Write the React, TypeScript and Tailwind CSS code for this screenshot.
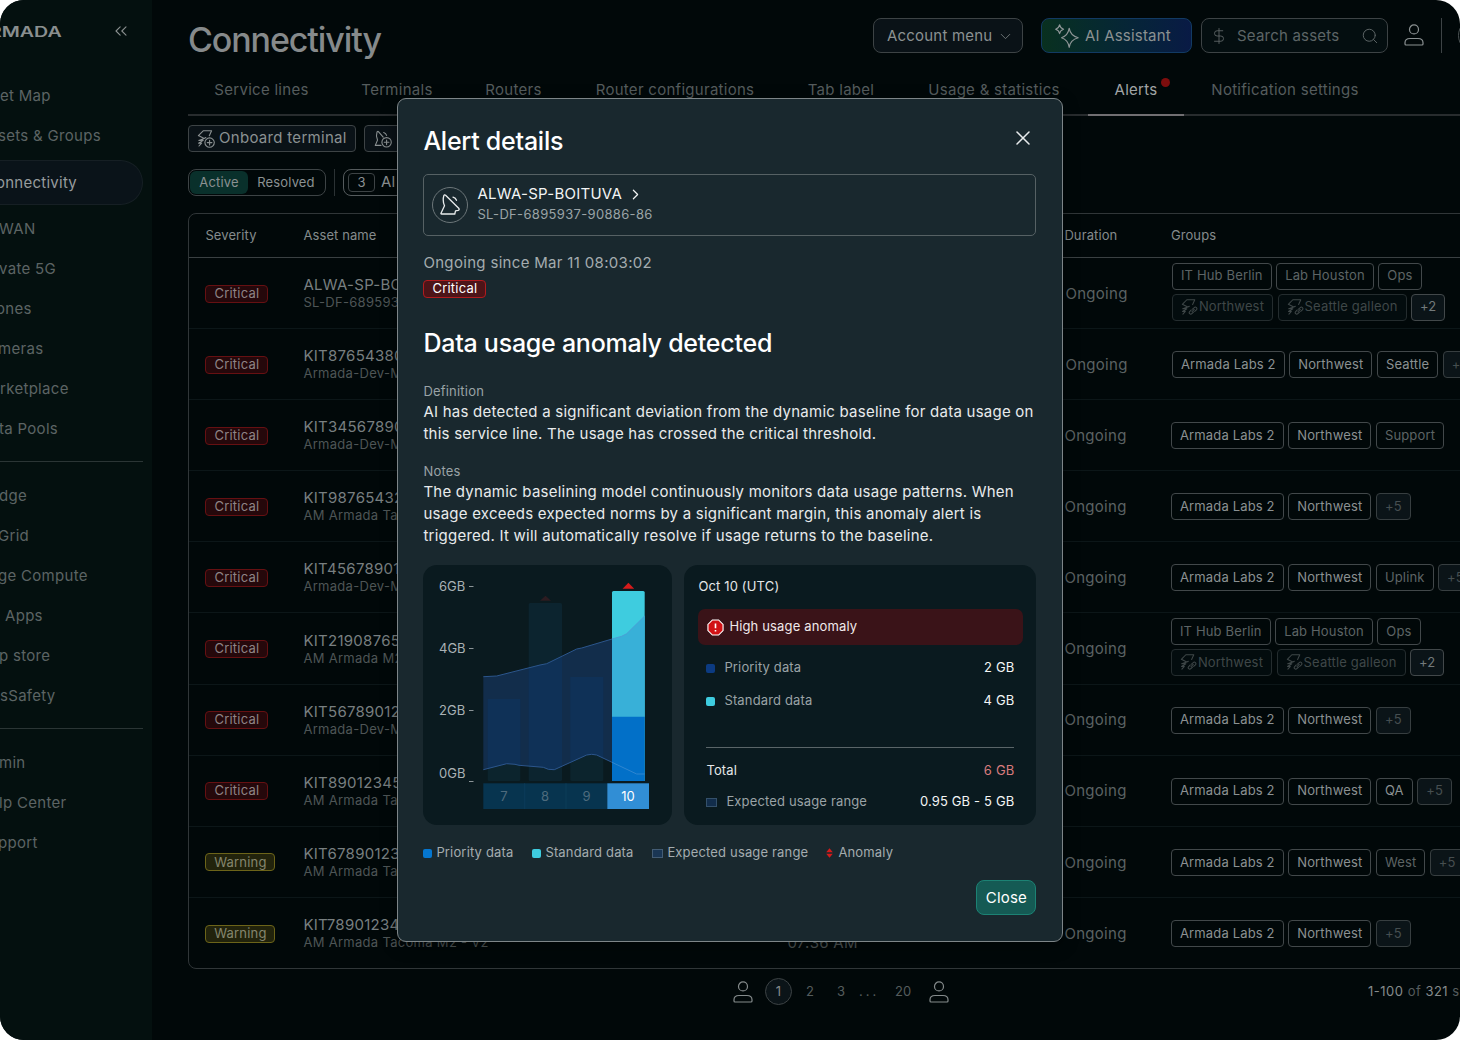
import React from 'react';
import { ChevronDown, ChevronRight, ChevronsLeft, DollarSign, Search, X } from 'lucide-react';

type Chip = { label: string; kind?: 'dim' | 'more' | 'moreDim' | 'linked' };

type Row = {
  severity: 'Critical' | 'Warning';
  name: string;
  sub: string;
  time?: string;
  shift?: boolean;
  chips: Chip[][];
};

const labs: Chip[] = [{ label: 'Armada Labs 2' }, { label: 'Northwest' }];
const plus5: Chip = { label: '+5', kind: 'moreDim' };
const hub: Chip[][] = [
  [
    { label: 'IT Hub Berlin', kind: 'dim' },
    { label: 'Lab Houston', kind: 'dim' },
    { label: 'Ops', kind: 'dim' },
  ],
  [
    { label: 'Northwest', kind: 'linked' },
    { label: 'Seattle galleon', kind: 'linked' },
    { label: '+2', kind: 'more' },
  ],
];

const rows: Row[] = [
  { severity: 'Critical', name: 'ALWA-SP-BO', sub: 'SL-DF-6895937', shift: true, chips: hub },
  { severity: 'Critical', name: 'KIT87654380', sub: 'Armada-Dev-M', shift: true, chips: [[...labs, { label: 'Seattle' }, plus5]] },
  { severity: 'Critical', name: 'KIT34567890', sub: 'Armada-Dev-M', chips: [[...labs, { label: 'Support', kind: 'dim' }]] },
  { severity: 'Critical', name: 'KIT98765432', sub: 'AM Armada Tac', chips: [[...labs, plus5]] },
  { severity: 'Critical', name: 'KIT45678901', sub: 'Armada-Dev-M', chips: [[...labs, { label: 'Uplink', kind: 'dim' }, plus5]] },
  { severity: 'Critical', name: 'KIT21908765', sub: 'AM Armada M2', chips: hub },
  { severity: 'Critical', name: 'KIT56789012', sub: 'Armada-Dev-M', chips: [[...labs, plus5]] },
  { severity: 'Critical', name: 'KIT89012345', sub: 'AM Armada Tac', chips: [[...labs, { label: 'QA' }, plus5]] },
  { severity: 'Warning', name: 'KIT67890123', sub: 'AM Armada Tac', chips: [[...labs, { label: 'West', kind: 'dim' }, plus5]] },
  { severity: 'Warning', name: 'KIT78901234', sub: 'AM Armada Tacoma M2 - V2', time: '07:36 AM', chips: [[...labs, plus5]] },
];

const tabs = [
  { label: 'Service lines', width: 'w-[147px]' },
  { label: 'Terminals', width: 'w-[124px]' },
  { label: 'Routers', width: 'w-[109px]' },
  { label: 'Router configurations', width: 'w-[214px]' },
  { label: 'Tab label', width: 'w-[118px]' },
  { label: 'Usage & statistics', width: 'w-[188px]' },
  { label: 'Alerts', width: 'w-[96px]', active: true },
  { label: 'Notification settings', width: 'w-[202px]' },
];

function TerminalIcon({ badge, className }: { badge: 'plus' | 'link'; className?: string }) {
  return (
    <svg viewBox="0 0 18 18" className={className} fill="none" stroke="currentColor" strokeWidth="1.1" strokeLinecap="round" strokeLinejoin="round">
      <path d="M1.4 5.6 6.2.8h8.400l-2.300 5M1.400 5.600l5.800 2.800-5.400 2h4.400l-4.600 2.900 3-.2-2.600 2.900M7.200 8.400l1.600-.8" />
      {badge === 'plus' ? (
        <>
          <circle cx="12.600" cy="12.600" r="4.700" />
          <path d="M12.600 10.300v4.600M10.300 12.600h4.600" />
        </>
      ) : (
        <path d="m12.200 10.800 1.800-1.700a1.600 1.600 0 0 1 2.300 2.300l-1.800 1.700M13.200 13.900l-1.700 1.700a1.600 1.600 0 0 1-2.300-2.300l1.700-1.700M11.600 13.500l2.400-2.400" />
      )}
    </svg>
  );
}

function DishIcon({ className }: { className?: string }) {
  return (
    <svg viewBox="0 0 20 21" className={className} fill="none" stroke="currentColor" strokeWidth="1.300" strokeLinecap="round" strokeLinejoin="round">
      <path d="M5.600 1.200C4.800.5 4.100.8 3.800 1.800 2.900 5 3.100 8.600 4.500 11.800L1 19.200q-.3.8.6.800h13.200l.7-3.200 2.700-.5c1-.3 1.300-1.100.5-2Z" />
      <path d="M13 3.200q2.700.7 3.500 3.100" />
    </svg>
  );
}

function DishPlusIcon({ className }: { className?: string }) {
  return (
    <svg viewBox="0 0 18 18" className={className} fill="none" stroke="currentColor" strokeWidth="1.100" strokeLinecap="round" strokeLinejoin="round">
      <path d="M7 15.400H1.300l2.200-5.300C2.300 7.600 2.200 4.600 3 2.200c.3-.9 1-1 1.600-.4l4.600 5.400M9.700 2.500q2.200.6 2.900 2.900" />
      <circle cx="12.600" cy="12.300" r="4.700" />
      <path d="M12.600 10v4.600M10.300 12.300h4.600" />
    </svg>
  );
}

function PersonIcon({ className }: { className?: string }) {
  return (
    <svg viewBox="0 0 20 22" className={className} fill="none" stroke="currentColor" strokeWidth="1.200">
      <circle cx="10" cy="5.400" r="4.500" />
      <path d="M1 20v-1.200C1 16.200 3.200 14.500 6 14.500h8c2.800 0 5 1.700 5 4.300V20c0 .7-.4 1-1 1H2c-.6 0-1-.3-1-1Z" />
    </svg>
  );
}

function SparklesIcon({ className }: { className?: string }) {
  return (
    <svg viewBox="0 0 24 24" className={className} fill="none" stroke="currentColor" strokeWidth="1.100" strokeLinejoin="round">
      <path d="M14.200 4.200c.8 5.200 3.100 8.100 9 9.600-5.900 1.500-8.200 4.200-9 9.600-.8-5.400-3.100-8.100-7.700-9.600 4.600-1.500 6.900-4.400 7.700-9.600Z" />
      <path d="M4.600.7c.4 2.500 1.600 3.800 4 4.500-2.400.7-3.600 2-4 4.500C4.200 7.200 3 5.900.6 5.200 3 4.500 4.200 3.200 4.600.7Z" />
    </svg>
  );
}

function NavItem({ label, nudge = '' }: { label: string; nudge?: string }) {
  return (
    <div className="h-10 pt-px flex items-center whitespace-nowrap text-[15px] tracking-[0.3px] text-[#5c6464]">
      <span className={nudge}>{label}</span>
    </div>
  );
}

function Sidebar() {
  return (
    <aside className="w-[152px] shrink-0 h-full bg-[#04100f] overflow-hidden">
      <div className="h-[76px] flex justify-between pr-[21px] pt-[21px]">
        <div className="h-5 -ml-[11px] flex items-center origin-left scale-x-[1.4] text-[14px] font-semibold text-[#8a8f8f]">RMADA</div>
        <ChevronsLeft size={20} strokeWidth={1.300} className="text-[#8a8f8f]" />
      </div>
      <NavItem label="et Map" />
      <NavItem label="sets & Groups" nudge="-ml-[2px]" />
      <div className="mt-1 mb-1 mr-[9px] h-[45px] pt-px flex items-center rounded-r-full border border-l-0 border-[#161f24] bg-[#0a1319] text-[15px] tracking-[0.250px] text-[#969b9d]">
        <span className="-ml-[4px]">onnectivity</span>
      </div>
      <NavItem label="WAN" nudge="-ml-px" />
      <NavItem label="vate 5G" nudge="-ml-px" />
      <NavItem label="ones" nudge="-ml-[4px]" />
      <NavItem label="meras" nudge="-ml-[2px]" />
      <NavItem label="rketplace" />
      <NavItem label="ta Pools" nudge="-ml-px" />
      <div className="mt-3 mb-[14px] mr-[9px] h-px bg-[#2b3535]" />
      <NavItem label="dge" nudge="-ml-px" />
      <NavItem label="Grid" nudge="-ml-[2px]" />
      <NavItem label="ge Compute" nudge="-ml-[2px]" />
      <NavItem label="Apps" nudge="ml-[5px]" />
      <NavItem label="p store" nudge="-ml-px" />
      <NavItem label="sSafety" />
      <div className="mt-3 mb-[14px] mr-[9px] h-px bg-[#2b3535]" />
      <NavItem label="min" nudge="-ml-[1px]" />
      <NavItem label="lp Center" nudge="-ml-px" />
      <NavItem label="pport" nudge="-ml-[2px]" />
    </aside>
  );
}

function Header() {
  return (
    <header className="h-[65px] flex shrink-0">
      <h1 className="w-[685px] shrink-0 pt-[18px] leading-[44px] text-[34px] font-medium tracking-[-1.100px] text-[#868a8b]">Connectivity</h1>
      <div className="flex pt-[18px] h-[53px] text-[15px] tracking-[0.2px] text-[#8b9192] whitespace-nowrap">
        <div className="w-[150px] shrink-0 pt-px flex items-center justify-between pl-[13px] pr-2 rounded-lg border border-[#3d4345] bg-[#0a1217]">
          Account menu
          <ChevronDown size={17} strokeWidth={1.200} className="text-[#7b8182]" />
        </div>
        <div className="ml-[18px] w-[151px] shrink-0 pt-px flex items-center pl-[13px] rounded-lg border border-[#123a63] bg-linear-to-r from-[#09301f] to-[#091a45]">
          <SparklesIcon className="size-6 shrink-0 text-[#8f9697]" />
          <span className="ml-[6px]">AI Assistant</span>
        </div>
        <div className="ml-[9px] w-[187px] shrink-0 pt-px flex items-center pl-2 rounded-lg border border-[#3d4345] bg-[#040e10] text-[#5d6566]">
          <DollarSign size={18} strokeWidth={1.200} />
          <span className="ml-[9px]">Search assets</span>
          <Search size={18} strokeWidth={1.300} className="ml-[22px]" />
        </div>
        <PersonIcon className="ml-[16px] mt-[6px] w-5 h-[22px] shrink-0 text-[#8b9192]" />
        <div className="ml-[17px] w-px shrink-0 bg-[#3d4345]" />
        <div className="ml-[16px] w-9 shrink-0 rounded-full border border-[#4c5354]" />
      </div>
    </header>
  );
}

function Tabs() {
  return (
    <nav className="h-[51px] shrink-0 flex w-[1310px] border-b-2 border-[#282c2e] text-[15px] tracking-[0.280px] text-[#555c5d]">
      {tabs.map((tab) => (
        <div key={tab.label} className={`relative h-[51px] shrink-0 flex items-center justify-center whitespace-nowrap ${tab.width} ${tab.active ? 'border-b-2 border-[#716f72] text-[#a1a5a6] pt-px' : 'pb-px'}`}>
          {tab.label}
          {tab.active && <span className="absolute left-[73px] top-[13px] size-[9px] rounded-full bg-[#7d0d0d]" />}
        </div>
      ))}
    </nav>
  );
}

function Toolbar() {
  return (
    <>
      <div className="mt-[9px] h-[27px] flex shrink-0">
        <div className="w-[168px] flex items-center pl-[8px] rounded-[4px] border border-[#3d4345] bg-[#0a1217] text-[15px] tracking-[0.3px] text-[#8b9192] whitespace-nowrap">
          <TerminalIcon badge="plus" className="size-[18px] mr-[4px]" />
          Onboard terminal
        </div>
        <div className="ml-[8px] w-[168px] flex items-center pl-[9px] rounded-[4px] border border-[#3d4345] bg-[#0a1217] text-[#8b9192]">
          <DishPlusIcon className="size-[18px]" />
        </div>
      </div>
      <div className="mt-[17px] h-[27px] flex shrink-0 text-[13px] tracking-[0.150px] text-[#8b9192]">
        <div className="w-[138px] flex rounded-[8px] border border-[#3d4345] p-px">
          <div className="w-[58px] flex items-center justify-center rounded-[6px] bg-[#09302b]">Active</div>
          <div className="flex-1 flex items-center justify-center">Resolved</div>
        </div>
        <div className="ml-[8px] w-px bg-[#2b3234]" />
        <div className="ml-[8px] w-[150px] flex items-center gap-[6px] pl-[4px] rounded-[8px] border border-[#555b5d]">
          <span className="w-[27px] h-[19px] flex items-center justify-center rounded-[4px] border border-[#3d4345]">3</span>
          <span className="text-[15px]">Al</span>
        </div>
      </div>
    </>
  );
}

function GroupChip({ chip }: { chip: Chip }) {
  let tone = 'border-[#42484a] text-[#8b9192]';
  if (chip.kind === 'dim') tone = 'border-[#42484a] text-[#5d6465]';
  if (chip.kind === 'linked') tone = 'border-[#242c2e] text-[#3f4748] bg-[#030c0e]';
  if (chip.kind === 'more') tone = 'border-[#42484a] text-[#737a7b] bg-[#0b1418]';
  if (chip.kind === 'moreDim') tone = 'border-[#373e40] text-[#464e50] bg-[#0b1418]';
  return (
    <span className={`h-[27px] shrink-0 flex items-center px-[8px] rounded-[4px] border text-[13px] tracking-[0.160px] whitespace-nowrap ${tone}`}>
      {chip.kind === 'linked' && <TerminalIcon badge="link" className="size-[17px] mr-px" />}
      {chip.label}
    </span>
  );
}

function AlertsTable() {
  return (
    <section className="mt-[17px] h-[756px] w-[1400px] shrink-0 flex flex-col rounded-[8px] border border-[#303638]">
      <div className="h-[44px] shrink-0 flex items-center border-b border-[#3a4042] pl-[16.400px] text-[13px] tracking-[0.1px] text-[#858b8c]">
        <span className="w-[98px]">Severity</span>
        <span className="w-[761px]">Asset name</span>
        <span className="w-[106.500px]">Duration</span>
        <span>Groups</span>
      </div>
      {rows.map((row, i) => (
        <div key={row.name} className={`h-[71.100px] shrink-0 pt-px flex items-center pl-[16.400px] ${i < rows.length - 1 ? 'border-b border-[#0c1618]' : ''}`}>
          <div className="w-[98px]">
            <SeverityBadge severity={row.severity} />
          </div>
          <div className="w-[484px]">
            <div className="leading-[18px] text-[15px] tracking-[0.270px] text-[#787f80]">{row.name}</div>
            <div className="leading-[17px] text-[13px] tracking-[0.3px] text-[#4e5556]">{row.sub}</div>
          </div>
          <div className="w-[277px] pt-[18px] leading-[18px] text-[15px] tracking-[0.270px] text-[#4e5556]">{row.time}</div>
          <div className={`flex items-center ${row.shift ? 'pl-px' : ''}`}>
            <div className="w-[106.500px] pt-px text-[15px] tracking-[0.3px] text-[#5b6263]">Ongoing</div>
            <div className={`flex flex-col gap-[4px] ${row.chips.length > 1 ? '-mt-[4px]' : ''}`}>
              {row.chips.map((line, j) => (
                <div key={j} className="flex gap-[4.500px]">
                  {line.map((chip) => (
                    <GroupChip key={chip.label} chip={chip} />
                  ))}
                </div>
              ))}
            </div>
          </div>
        </div>
      ))}
    </section>
  );
}

function SeverityBadge({ severity }: { severity: 'Critical' | 'Warning' }) {
  const tone = severity === 'Critical' ? 'w-[63px] border-[#661012] bg-[#25080b] text-[#8f8486]' : 'w-[70px] border-[#6c6419] bg-[#22230c] text-[#85866f]';
  return <div className={`h-[18px] flex items-center justify-center rounded-[4px] border text-[13px] tracking-[0.2px] ${tone}`}>{severity}</div>;
}

function Pagination() {
  return (
    <div className="mt-[9px] h-[27px] w-[1400px] pl-[545px] flex shrink-0 items-center text-[13px] text-[#555c5d] whitespace-nowrap">
      <PersonIcon className="w-5 h-[22px] shrink-0 text-[#858b8c]" />
      <span className="ml-[12px] size-[27px] shrink-0 flex items-center justify-center rounded-full border border-[#3d4345] bg-[#0b1418] text-[#858b8c]">1</span>
      <span className="ml-[14px] w-[31px] shrink-0">2</span>
      <span className="w-[22px] shrink-0">3</span>
      <span className="w-[36px] shrink-0 tracking-[3px]">...</span>
      <span className="w-[34px] shrink-0">20</span>
      <PersonIcon className="w-5 h-[22px] shrink-0 text-[#858b8c]" />
      <span className="ml-[419px] tracking-[0.500px]">
        <span className="text-[#858b8c]">1-100</span> of <span className="text-[#858b8c]">321</span> s
      </span>
    </div>
  );
}

function UsageChart() {
  return (
    <svg viewBox="0 0 249 260" className="w-[249px] h-[260px] rounded-[14px] bg-[#0a1a1f]">
      <g fontSize="13" fill="#a9b1b4">
        <text x="16" y="26">6GB</text>
        <text x="16" y="88">4GB</text>
        <text x="16" y="150.400">2GB</text>
        <text x="16" y="212.700">0GB</text>
      </g>
      <path d="M46 21.500h4.500M46 83.500h4.500M46 145.500h4.500M46 216.500h4.500" stroke="#8b9497" />

      <rect x="64.700" y="134" width="32.600" height="82" rx="1.500" fill="#0c242d" />
      <rect x="105.700" y="38" width="33.300" height="178" rx="1.500" fill="#0c242f" />
      <rect x="147.300" y="112" width="33" height="104" rx="1.500" fill="#0c242d" />
      <path d="M60.300 111.700 73.700 111 117 100l6.700-1.300 30-14.700 5-1 30.300-9v123.300L173.700 190l-5-.7-5 .7-32.400 14.700-6-.4-5-2L96 200.300l-4-1-8.300-.6-23.400 6Z" fill="#122d4b" />
      <path d="M64.700 134h32.600v66.500l-5.300-1.200-8.300-.6-19 4.900ZM105.700 102.900 117 100l6.700-1.300L139 91.200v110l-7.700 3.500-6-.4-5-2-14.600-1.200ZM147.300 112h33v81.200l-6.600-3.200-5-.7-5 .7-16.400 7.400Z" fill="#0f3157" />

      <path d="M189 216V27.500q0-1.500 1.500-1.500h29.700q1.500 0 1.500 1.500V216Z" fill="#3eccdf" />
      <path d="M189 74l9.700-2.700 5-2.600 18-17.700v101H189Z" fill="#38b0d8" />
      <path d="M189 151.700h32.700V216H189Z" fill="#0270c8" />

      <path d="M60.300 111.700 73.700 111 117 100l6.700-1.300 30-14.700 5-1 30.300-9" fill="none" stroke="#2c568c" />
      <path d="M189 74l9.700-2.700 5-2.600 18-17.700" fill="none" stroke="#4a9fd6" />
      <path d="m60.300 204.700 23.400-6 8.300.6 4 1 24.300 2 5 2 6 .4 32.400-14.700 5-.7 5 .7 15.300 7.300" fill="none" stroke="#2c568c" />
      <path d="m189 197.300 24.700 11.700h8" fill="none" stroke="#2f86d0" />

      <path d="m205.400 17.700 5.800 6h-11.600Z" fill="#d51b1b" />
      <path d="m122.500 30.700 5.500 5h-11Z" fill="#2d1c21" />

      <rect x="60.300" y="218.300" width="124" height="25.700" fill="#07344f" />
      <path d="M101.700 218.300V244M143 218.300V244" stroke="#0c3c59" />
      <rect x="184.300" y="218.300" width="41.700" height="25.700" fill="#318ed5" />
      <g fontSize="13" fill="#4e6b7d" textAnchor="middle">
        <text x="81" y="236">7</text>
        <text x="122" y="236">8</text>
        <text x="163.500" y="236">9</text>
        <text x="205" y="236" fill="#ffffff">10</text>
      </g>
    </svg>
  );
}

function UsageSummary() {
  return (
    <div className="w-[352px] h-[260px] px-[14px] pt-[11px] rounded-[14px] bg-[#0a1a1f] text-[13px] tracking-[0.150px] text-[#9aa3a6]">
      <div className="h-5 leading-5 text-[#e4e7e8]">Oct 10 (UTC)</div>
      <div className="mt-[13px] -mr-px h-[36px] flex items-center pl-[9px] rounded-[7px] bg-[#3a1318] text-[#f0e9ea]">
        <svg viewBox="0 0 18 18" className="size-[17px] mr-[5px]">
          <path d="M5.700 1h6.600L17 5.700v6.600L12.300 17H5.700L1 12.300V5.700Z" fill="#d11216" stroke="#ffffff" strokeWidth="1.200" />
          <path d="M9 4.800v4.900M9 11.700v1.600" stroke="#ffffff" strokeWidth="1.700" />
        </svg>
        High usage anomaly
      </div>
      <div className="px-[8px]">
        <div className="mt-[13px] h-5 flex items-center">
          <span className="size-[9px] rounded-[2px] bg-[#0c3b82]" />
          <span className="ml-[9px]">Priority data</span>
          <span className="ml-auto text-[#f3f5f5]">2 GB</span>
        </div>
        <div className="mt-[13px] h-5 flex items-center">
          <span className="size-[9px] mt-px rounded-[2px] bg-[#3eccdf]" />
          <span className="ml-[9px]">Standard data</span>
          <span className="ml-auto text-[#f3f5f5]">4 GB</span>
        </div>
        <div className="mt-[36px] h-px bg-[#5a6568]" />
        <div className="mt-[13px] h-5 flex items-center justify-between text-[#e4e7e8]">
          Total
          <span className="text-[#d97b7d]">6 GB</span>
        </div>
        <div className="mt-[11px] h-5 flex items-center">
          <span className="w-[11px] h-[9px] mt-px border border-[#34506a] bg-[#122d4b]" />
          <span className="ml-[9px]">Expected usage range</span>
          <span className="ml-auto text-[#f3f5f5]">0.95 GB - 5 GB</span>
        </div>
      </div>
    </div>
  );
}

function AlertDialog() {
  return (
    <div role="dialog" className="absolute left-[397px] top-[98px] w-[666px] h-[844px] pl-[25.400px] pr-[25.600px] pt-[26px] rounded-[9px] border border-[#7d8588] bg-[#19282e] text-[#e8ebec] shadow-[0_4px_16px_rgba(0,0,0,0.4)]">
      <div className="h-8 flex items-center justify-between">
        <h2 className="pt-[2px] text-[25px] font-medium tracking-[-0.250px] text-white">Alert details</h2>
        <X size={24} strokeWidth={1.500} className="-mt-[6px] mr-[1.400px]" />
      </div>

      <div className="mt-[16.500px] h-[62px] flex items-center pl-[8px] rounded-[5px] border border-[#566164]">
        <div className="size-[36px] flex items-center justify-center rounded-full border border-[#6c7679]">
          <DishIcon className="w-[20px] h-[21px]" />
        </div>
        <div className="ml-[9px] -mt-px">
          <div className="h-[20px] flex items-center text-[15px] tracking-[0.260px] text-[#f3f5f5]">
            ALWA-SP-BOITUVA
            <ChevronRight size={17} strokeWidth={1.700} className="ml-[5px]" />
          </div>
          <div className="h-[20px] leading-[20px] text-[13px] tracking-[0.330px] text-[#9aa3a6]">SL-DF-6895937-90886-86</div>
        </div>
      </div>

      <div className="mt-[16.500px] h-[21px] leading-[21px] text-[15px] tracking-[0.320px] text-[#a4acaf]">Ongoing since Mar 11 08:03:02</div>
      <div className="mt-[7px] w-[63px] h-[18px] flex items-center justify-center rounded-[4px] border border-[#b01b1e] bg-[#4d1418] text-[13px] tracking-[0.200px] text-white">Critical</div>

      <h3 className="mt-[29px] h-8 leading-8 text-[25px] font-medium tracking-[-0.250px] text-white">Data usage anomaly detected</h3>

      <div className="mt-[24px] h-[17px] leading-[17px] text-[13px] tracking-[0.200px] text-[#9aa3a6]">Definition</div>
      <p className="pt-px leading-[22px] text-[15px] tracking-[0.240px]">
        AI has detected a significant deviation from the dynamic baseline for data usage on
        <br />
        this service line. The usage has crossed the critical threshold.
      </p>

      <div className="mt-[18px] h-[17px] leading-[17px] text-[13px] tracking-[0.200px] text-[#9aa3a6]">Notes</div>
      <p className="h-[66px] pt-px leading-[22px] text-[15px] tracking-[0.240px]">
        The dynamic baselining model continuously monitors data usage patterns. When
        <br />
        usage exceeds expected norms by a significant margin, this anomaly alert is
        <br />
        triggered. It will automatically resolve if usage returns to the baseline.
      </p>

      <div className="mt-[19px] flex gap-[12px]">
        <UsageChart />
        <UsageSummary />
      </div>

      <div className="mt-[18px] h-5 flex items-center text-[13px] tracking-[0.160px] text-[#a4acaf]">
        <span className="size-[9px] rounded-[2px] bg-[#0576cf] mr-[4px]" />
        <span className="w-[96px]">Priority data</span>
        <span className="size-[9px] rounded-[2px] bg-[#3eccdf] mr-[4px]" />
        <span className="w-[107px]">Standard data</span>
        <span className="w-[11px] h-[9px] border border-[#435c74] bg-[#1a3654] mr-[4px]" />
        <span className="w-[159px]">Expected usage range</span>
        <svg viewBox="0 0 7 10" className="w-[7px] h-[10px] mr-[5px]">
          <path d="M3.500.3 6.800 4.300H.2ZM3.500 9.700.2 5.700h6.600Z" fill="#d51b1b" />
        </svg>
        Anomaly
      </div>

      <div className="mt-[17px] flex justify-end">
        <button className="w-[60px] h-[35px] pt-px rounded-[8px] border border-[#1c8274] bg-[#155a54] text-[15px] tracking-[0.200px] text-white">Close</button>
      </div>
    </div>
  );
}

export default function App() {
  return (
    <div className="w-[1460px] h-[1040px] bg-white">
      <div className="relative w-full h-full flex overflow-hidden rounded-[24px] bg-[#010809] font-['Inter',sans-serif]">
        <Sidebar />
        <main className="flex-1 min-w-0 pl-[36px] flex flex-col overflow-hidden">
          <Header />
          <Tabs />
          <Toolbar />
          <AlertsTable />
          <Pagination />
        </main>
        <AlertDialog />
      </div>
    </div>
  );
}
